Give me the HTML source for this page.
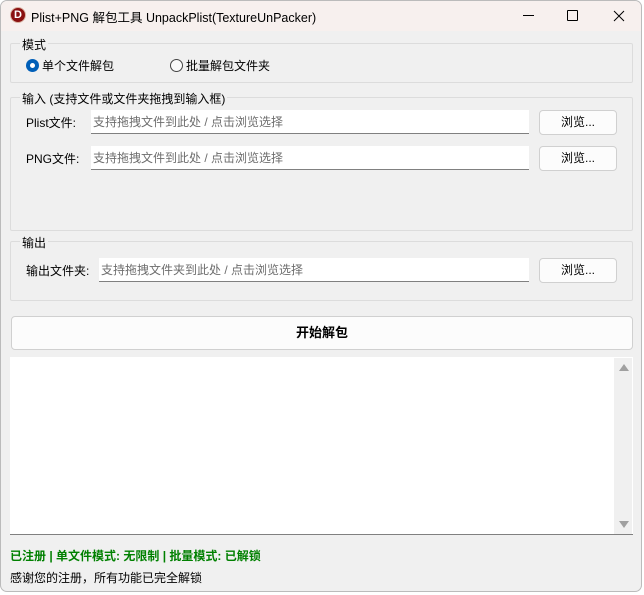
<!DOCTYPE html>
<html><head><meta charset="utf-8"><style>
*{box-sizing:border-box;margin:0;padding:0}
body{width:644px;height:595px;background:#fff;font-family:"Liberation Sans","Noto Sans CJK SC",sans-serif;font-size:12px;color:#000;position:relative;overflow:hidden}
.win{position:absolute;left:0;top:0;width:642px;height:592px;background:#f0f0f0;border-radius:7px;overflow:hidden;box-shadow:inset 0 0 0 1px #bbb}
.title{position:absolute;left:1px;top:1px;width:640px;height:30px;background:#f7f0ee;border-radius:6px 6px 0 0}
.abs{position:absolute}
.grp{position:absolute;border:1px solid #dcdcdc;border-radius:2px}
.lg{position:absolute;background:#f0f0f0;padding:0 2px;font-size:12px}
.inp{position:absolute;background:#fff;border-bottom:1px solid #808080;height:24px;color:#6d6d6d;padding:3px 2px;font-size:12px}
.btn{position:absolute;background:#fcfcfc;border:1px solid #d0d0d0;border-radius:4px;text-align:center;font-size:12px}
</style></head><body>
<div class="win">
<div class="title"></div>
 <div class="abs" style="left:10px;top:7px;width:16px;height:16px;border-radius:50%;background:#8a1010;color:#fff;font-weight:bold;font-size:11px;text-align:center;line-height:15px;border:1px solid #d8b0a0">D</div>
 <div class="abs" style="left:31px;top:7px;font-size:12.5px">Plist+PNG 解包工具 UnpackPlist(TextureUnPacker)</div>
 <div class="abs" style="left:523px;top:15px;width:11px;height:1px;background:#000"></div>
 <div class="abs" style="left:567px;top:10px;width:11px;height:11px;border:1px solid #000;border-radius:1px"></div>
 <svg class="abs" style="left:613px;top:10px" width="12" height="12"><path d="M1 1L11 11M11 1L1 11" stroke="#000" stroke-width="1"/></svg>

<div class="grp" style="left:10px;top:43px;width:623px;height:40px"></div>
<div class="lg" style="left:20px;top:36px">模式</div>
<div class="abs" style="left:26px;top:59px;width:13px;height:13px;border-radius:50%;background:#005fb8"><div style="margin:4px;width:5px;height:5px;border-radius:50%;background:#fff"></div></div>
<div class="abs" style="left:42px;top:57px">单个文件解包</div>
<div class="abs" style="left:170px;top:59px;width:13px;height:13px;border-radius:50%;border:1px solid #444;background:#fafafa"></div>
<div class="abs" style="left:186px;top:57px">批量解包文件夹</div>

<div class="grp" style="left:10px;top:97px;width:623px;height:134px"></div>
<div class="lg" style="left:20px;top:90px">输入 (支持文件或文件夹拖拽到输入框)</div>
<div class="abs" style="left:26px;top:114px">Plist文件:</div>
<div class="inp" style="left:91px;top:110px;width:438px">支持拖拽文件到此处 / 点击浏览选择</div>
<div class="btn" style="left:539px;top:110px;width:78px;height:25px;line-height:23px">浏览...</div>
<div class="abs" style="left:26px;top:150px">PNG文件:</div>
<div class="inp" style="left:91px;top:146px;width:438px">支持拖拽文件到此处 / 点击浏览选择</div>
<div class="btn" style="left:539px;top:146px;width:78px;height:25px;line-height:23px">浏览...</div>

<div class="grp" style="left:10px;top:241px;width:623px;height:60px"></div>
<div class="lg" style="left:20px;top:234px">输出</div>
<div class="abs" style="left:26px;top:262px">输出文件夹:</div>
<div class="inp" style="left:99px;top:258px;width:430px">支持拖拽文件夹到此处 / 点击浏览选择</div>
<div class="btn" style="left:539px;top:258px;width:78px;height:25px;line-height:23px">浏览...</div>

<div class="btn" style="left:11px;top:316px;width:622px;height:34px;line-height:32px;font-weight:bold;font-size:13px">开始解包</div>

<div class="abs" style="left:10px;top:357px;width:623px;height:178px;background:#fff;border-bottom:1px solid #808080"></div>
<div class="abs" style="left:614px;top:358px;width:18px;height:176px;background:#f0f0f0"></div>
<div class="abs" style="left:619px;top:364px;width:0;height:0;border-left:5px solid transparent;border-right:5px solid transparent;border-bottom:7px solid #a0a0a0"></div>
<div class="abs" style="left:619px;top:521px;width:0;height:0;border-left:5px solid transparent;border-right:5px solid transparent;border-top:7px solid #a0a0a0"></div>

<div class="abs" style="left:10px;top:547px;color:#008000;font-weight:bold">已注册 | 单文件模式: 无限制 | 批量模式: 已解锁</div>
<div class="abs" style="left:10px;top:569px">感谢您的注册，所有功能已完全解锁</div>
</div>
</body></html>
